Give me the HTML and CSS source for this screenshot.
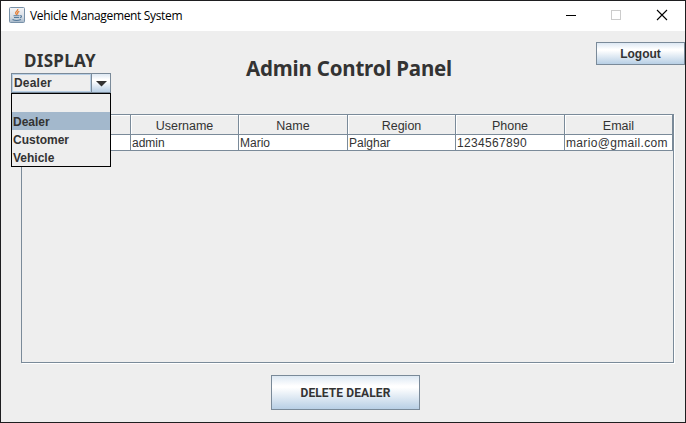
FILE: index.html
```html
<!DOCTYPE html>
<html lang="en">
<head>
<meta charset="utf-8">
<title>Vehicle Management System</title>
<link rel="stylesheet" href="styles.css">
</head>
<body>
<div class="window">
  <header class="titlebar">
    <svg class="app-icon" width="16" height="16" viewBox="0 0 16 16">
      <defs><linearGradient id="ib" x1="0" y1="0" x2="0" y2="1"><stop offset="0" stop-color="#f4f5f7"/><stop offset="0.6" stop-color="#d9dfe6"/><stop offset="1" stop-color="#a6b8c9"/></linearGradient></defs>
      <rect x=".5" y=".5" width="15" height="15" rx="1" fill="url(#ib)" stroke="#7891a8"/>
      <path d="M8.700 2C9.500 4 5.800 4.600 6.700 6.500L7.900 8M10.300 4.300C8.500 5.200 8 5.900 9 7.400" fill="none" stroke="#e5823c" stroke-width="1.300"/>
      <path d="M4.500 8.700H10.500M5 10.500H10M11 8.800C13 8.300 13 10.300 10.800 10.800M3.500 12.500C5.500 13.500 9.500 13.500 12 12.500" fill="none" stroke="#567b9c" stroke-width="1.100"/>
    </svg>
    <span class="caption">Vehicle Management System</span>
    <svg class="controls" width="115" height="30" viewBox="0 0 115 30" fill="none" shape-rendering="crispEdges">
      <path d="M11 14.500H21" stroke="#000"/>
      <rect x="56.500" y="9.500" width="9" height="9" stroke="#ccc"/>
      <path d="M102 9L112 19M112 9L102 19" stroke="#000" stroke-width="1.100" shape-rendering="auto"/>
    </svg>
  </header>
  <main class="content">
    <section class="top">
      <div class="display">
        <label class="display-label">DISPLAY</label>
        <div class="combo">
          <span class="combo-value">Dealer</span>
          <span class="combo-arrow"><svg width="11" height="6" viewBox="0 0 11 6"><path d="M0 0H11L5.500 5.500Z" fill="#333"/></svg></span>
          <ul class="popup"><li></li><li class="selected">Dealer</li><li>Customer</li><li>Vehicle</li></ul>
        </div>
      </div>
      <h1 class="heading">Admin Control Panel</h1>
      <button class="btn logout">Logout</button>
    </section>
    <section class="scroll">
      <div class="row head"><span></span><span>Username</span><span>Name</span><span>Region</span><span>Phone</span><span>Email</span></div>
      <div class="row data"><span></span><span>admin</span><span>Mario</span><span>Palghar</span><span class="phone">1234567890</span><span class="email">mario@gmail.com</span></div>
    </section>
    <button class="btn delete">DELETE DEALER</button>
  </main>
</div>
</body>
</html>
```
FILE: styles.css
```css
* { box-sizing: border-box; }
body { margin: 0; background: #1e1e20; font-family: "Liberation Sans", Arial, sans-serif; font-size: 12px; color: #333; overflow: hidden; }
.window { width: 684px; height: 421px; margin: 1px; background: #eee; display: flex; flex-direction: column; }
.titlebar { height: 30px; background: #fff; display: flex; flex: none; }
.app-icon { margin: 6px 0 0 8px; }
.caption { margin-left: 5px; flex: 1; font: 12px/30px "Open Sans", sans-serif; letter-spacing: -0.34px; color: #000; white-space: nowrap; }
.controls { margin-right: 15px; }
.content { flex: 1; display: flex; flex-direction: column; }
.top { height: 83px; display: grid; grid-template-columns: 110px 1fr 89px; }
.display { padding: 19px 0 0 10px; }
.display-label { display: block; height: 23px; padding-left: 13px; font: bold 17px/21px "Noto Sans", sans-serif; letter-spacing: 0.3px; white-space: nowrap; }
.combo { position: relative; width: 100px; height: 20px; border: 1px solid #7a8a99; display: flex; font-weight: bold; line-height: 18px; }
.combo-value { flex: 1; border: 1px solid #b8cfe5; padding-left: 1px; line-height: 17px; letter-spacing: 0.2px; }
.combo-arrow { width: 19px; border-left: 1px solid #7a8a99; background: linear-gradient(#dde8f3, #fff 30%, #fff 40%, #b8cfe5); display: flex; align-items: center; justify-content: center; }
.combo-arrow svg { margin-top: 2px; }
.popup { position: absolute; left: -1px; top: 19px; width: 100px; height: 74px; margin: 0; padding: 0; border: 1px solid #000; background: #eee; list-style: none; }
.popup li { height: 18px; padding-left: 1px; line-height: 20px; }
.popup .selected { background: #a3b8cc; }
.heading { margin: 0; padding: 23px 0 0 135px; font: bold 20.5px/28px "Noto Sans", sans-serif; letter-spacing: -0.2px; white-space: nowrap; }
.btn { padding: 0; border: 1px solid #7a8a99; border-radius: 0; background: linear-gradient(#dde8f3, #fff 30%, #fff 35%, #b8cfe5); color: #333; font: bold 12px "Liberation Sans", Arial, sans-serif; }
.logout { height: 23px; margin-top: 11px; }
.scroll { width: 653px; height: 249px; margin-left: 20px; border: 1px solid #7a8a99; box-shadow: 1px 1px #fff; }
.row { display: grid; grid-template-columns: 109px 108px 109px 108px 109px 108px; width: 651px; }
.row span { border-right: 1px solid #7a8a99; border-bottom: 1px solid #7a8a99; white-space: nowrap; }
.head span { height: 20px; text-align: center; line-height: 22px; font-size: 12.5px; box-shadow: inset 1px 1px #fff; }
.data span { height: 16px; padding-left: 1px; line-height: 16px; background: #fff; }
.data .phone { letter-spacing: 0.33px; }
.data .email { letter-spacing: 0.33px; }
.delete { width: 149px; height: 35px; margin: 12px 0 0 270px; font-family: Roboto, sans-serif; letter-spacing: 0.1px; }
```
